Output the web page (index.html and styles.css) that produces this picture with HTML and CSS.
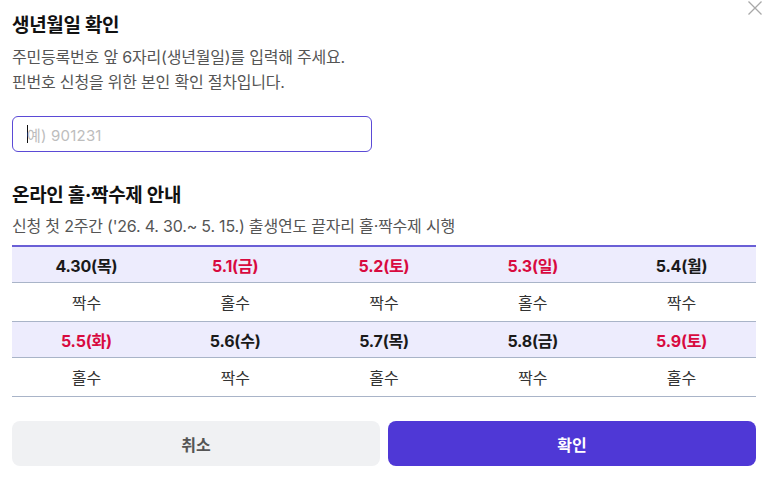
FILE: index.html
```html
<!DOCTYPE html>
<html lang="ko">
<head>
<meta charset="utf-8">
<link rel="stylesheet" href="styles.css">
</head>
<body>
<div class="modal">
  <button class="close" aria-label="닫기">
    <svg width="16" height="16" viewBox="0 0 16 16"><path d="M1.5 1.5 L14.5 14.5 M14.5 1.5 L1.5 14.5" stroke="#a8a8a8" stroke-width="1.3" fill="none"/></svg>
  </button>
  <h2 class="title">생년월일 확인</h2>
  <p class="desc">주민등록번호 앞 6자리(생년월일)를 입력해 주세요.<br>핀번호 신청을 위한 본인 확인 절차입니다.</p>
  <div class="input-box"><span class="caret"></span><span class="ph">예) 901231</span></div>

  <h2 class="title sec">온라인 홀·짝수제 안내</h2>
  <p class="desc sub">신청 첫 2주간 ('26. 4. 30.~ 5. 15.) 출생연도 끝자리 홀·짝수제 시행</p>

  <div class="table">
    <div class="row head">
      <div class="cell">4.30(목)</div>
      <div class="cell red">5.1(금)</div>
      <div class="cell red">5.2(토)</div>
      <div class="cell red">5.3(일)</div>
      <div class="cell">5.4(월)</div>
    </div>
    <div class="row body">
      <div class="cell">짝수</div>
      <div class="cell">홀수</div>
      <div class="cell">짝수</div>
      <div class="cell">홀수</div>
      <div class="cell">짝수</div>
    </div>
    <div class="row head">
      <div class="cell red">5.5(화)</div>
      <div class="cell">5.6(수)</div>
      <div class="cell">5.7(목)</div>
      <div class="cell">5.8(금)</div>
      <div class="cell red">5.9(토)</div>
    </div>
    <div class="row body">
      <div class="cell">홀수</div>
      <div class="cell">짝수</div>
      <div class="cell">홀수</div>
      <div class="cell">짝수</div>
      <div class="cell">홀수</div>
    </div>
  </div>

  <div class="actions">
    <button class="btn cancel">취소</button>
    <button class="btn ok">확인</button>
  </div>
</div>
</body>
</html>
```

FILE: styles.css
```css
* { box-sizing: border-box; }
html, body { margin: 0; padding: 0; background: #fff; }
body {
  font-family: "Inter", "Noto Sans CJK KR", sans-serif;
  color: #111;
}
.modal {
  position: relative;
  width: 768px;
  height: 479px;
  padding: 12px 12px 0 12px;
}
.close {
  position: absolute;
  top: 0;
  right: 5px;
  width: 16px;
  height: 16px;
  padding: 0;
  border: 0;
  background: none;
}
.close svg { display: block; }
.title {
  margin: 0;
  font-size: 19px;
  font-weight: 700;
  line-height: 28px;
  letter-spacing: -0.3px;
  color: #111;
}
.desc {
  margin: 5px 0 0;
  font-size: 16px;
  line-height: 25px;
  color: #555;
  letter-spacing: -0.2px;
}
.input-box {
  margin-top: 21px;
  width: 360px;
  height: 36px;
  border: 1px solid #5b4ad6;
  border-radius: 6px;
  display: flex;
  align-items: center;
  padding-left: 14px;
}
.caret {
  width: 1px;
  height: 18px;
  background: #111;
  margin-right: -1px;
}
.ph {
  font-size: 15px;
  color: #bdbdbd;
  letter-spacing: 0.2px;
}
.title.sec { margin-top: 30px; }
.desc.sub { margin-top: 4px; }
.table {
  margin-top: 6px;
  border-top: 2px solid #6a5fd6;
}
.row {
  display: grid;
  grid-template-columns: repeat(5, 1fr);
  border-bottom: 1px solid #a9b4c8;
}
.row.head { height: 36px; background: #edecfd; }
.row.body { height: 39px; }
.cell {
  display: flex;
  align-items: center;
  justify-content: center;
  font-size: 16px;
}
.row.head .cell { font-weight: 700; color: #1a1a1a; letter-spacing: -0.2px; }
.row.head .cell.red { color: #d80a3f; }
.row.body .cell { color: #333; }
.actions {
  margin-top: 24px;
  display: flex;
  gap: 8px;
}
.btn {
  flex: 1;
  height: 45px;
  border: 0;
  border-radius: 8px;
  font-family: inherit;
  font-size: 16px;
  font-weight: 700;
}
.btn.cancel { background: #f0f1f3; color: #555; }
.btn.ok { background: #4f38d6; color: #fff; }
```
